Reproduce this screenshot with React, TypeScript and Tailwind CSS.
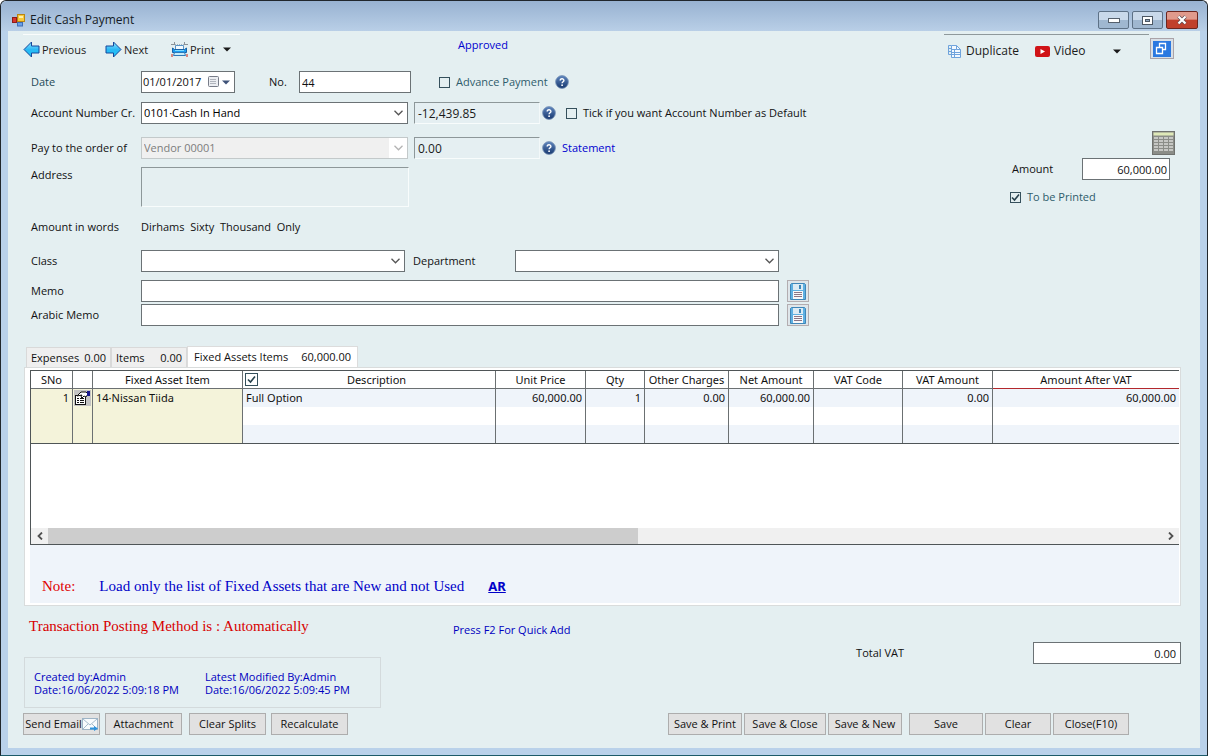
import type { ReactNode } from "react";

const COLUMNS = [
  { key: "sno", label: "SNo", width: "w-[42px]", align: "text-right" },
  { key: "edit", label: "", width: "w-[20px]", align: "text-center" },
  { key: "item", label: "Fixed Asset Item", width: "w-[150px]", align: "text-left" },
  { key: "description", label: "Description", width: "w-[253px]", align: "text-left" },
  { key: "unitPrice", label: "Unit Price", width: "w-[90px]", align: "text-right" },
  { key: "qty", label: "Qty", width: "w-[59px]", align: "text-right" },
  { key: "otherCharges", label: "Other Charges", width: "w-[84px]", align: "text-right" },
  { key: "netAmount", label: "Net Amount", width: "w-[85px]", align: "text-right" },
  { key: "vatCode", label: "VAT Code", width: "w-[89px]", align: "text-left" },
  { key: "vatAmount", label: "VAT Amount", width: "w-[90px]", align: "text-right" },
  { key: "afterVat", label: "Amount After VAT", width: "", align: "text-right" },
];

const ROWS: Record<string, string>[] = [
  {
    sno: "1",
    item: "14·Nissan Tiida",
    description: "Full Option",
    unitPrice: "60,000.00",
    qty: "1",
    otherCharges: "0.00",
    netAmount: "60,000.00",
    vatAmount: "0.00",
    afterVat: "60,000.00",
  },
  {},
  {},
];

const FIELD = "h-[22px] border border-[#6b7275] bg-white px-0.5 outline-none";

function FormIcon() {
  return (
    <svg width="14" height="14" viewBox="0 0 14 14" className="shrink-0">
      <rect x="0.5" y="4.5" width="4" height="5" fill="#d8342c" stroke="#8e1d18" />
      <rect x="5.5" y="1.5" width="7" height="7" fill="#f8c93c" stroke="#b98512" />
      <rect x="7" y="3" width="4" height="2" fill="#fff0a8" />
      <rect x="5.5" y="9.5" width="5" height="3.5" fill="#6aa0e8" stroke="#3e6db5" />
    </svg>
  );
}

function ArrowIcon({ flip = false }: { flip?: boolean }) {
  return (
    <svg width="17" height="17" viewBox="0 0 17 17">
      <defs>
        <linearGradient id="arrow" x1="0" y1="0" x2="0" y2="1">
          <stop offset="0" stopColor="#8fe6ff" />
          <stop offset="0.5" stopColor="#2bb8f5" />
          <stop offset="1" stopColor="#18c8f4" />
        </linearGradient>
      </defs>
      <path
        d={flip ? "M8.5 1v4H1v7h7.5v4L16 8.500z" : "M8.5 1v4H16v7H8.500v4L1 8.500z"}
        fill="url(#arrow)"
        stroke="#15479c"
        strokeLinejoin="round"
      />
    </svg>
  );
}

function PrinterIcon() {
  return (
    <svg width="17" height="16" viewBox="0 0 17 16">
      <path d="M3.500 0v3M13.500 0v3M0 2.500h3M14 2.500h3" stroke="#8b9298" />
      <path d="M4 2.500h9" stroke="#a8b4bc" strokeDasharray="1 1" />
      <path d="M4.500 7V3.500h8V7" fill="#f2faff" stroke="#5b93c4" />
      <path d="M1.500 6v4.500h14V6l-2 1.500h-10z" fill="#1d9df0" stroke="#1762a8" />
      <path d="M4 8.500h9" stroke="#7fdcff" />
      <path d="M3.500 10.500h10l1 3h-12z" fill="#c6ecfb" stroke="#2d78b8" />
      <path d="M0 12h2v3H0zM15 12h2v3h-2z" fill="#d98880" />
    </svg>
  );
}

function Caret({ className = "text-[#1a1a1a]" }: { className?: string }) {
  return (
    <svg width="8" height="5" viewBox="0 0 8 5" className={className}>
      <path d="M0 0.5h8L4 4.5z" fill="currentColor" />
    </svg>
  );
}

function DuplicateIcon() {
  return (
    <svg width="14" height="13" viewBox="0 0 14 13" fill="none" stroke="#6fa3dc">
      <path d="M3.500 0.500h-3v9h3M0.500 3.500h3M0.500 6.500h3" />
      <path d="M3.500 12.500v-12h5l4 4v8z" fill="#f3f9ff" />
      <path d="M8.500 0.500v4h4M3.500 4.500h5M3.500 7.500h9M3.500 9.500h9M6.500 4.500v8" />
    </svg>
  );
}

function VideoIcon() {
  return (
    <svg width="15" height="11" viewBox="0 0 15 11">
      <rect width="15" height="11" rx="2" fill="#d01317" />
      <path d="M5.500 3v5L10 5.500z" fill="#fff" />
    </svg>
  );
}

function HelpIcon() {
  return (
    <svg width="14" height="14" viewBox="0 0 14 14" className="shrink-0">
      <defs>
        <linearGradient id="help" x1="0" y1="0" x2="0" y2="1">
          <stop offset="0" stopColor="#5f86be" />
          <stop offset="1" stopColor="#17386f" />
        </linearGradient>
      </defs>
      <circle cx="7" cy="7" r="6.400" fill="url(#help)" stroke="#7a94b8" strokeWidth="0.800" />
      <path d="M5.200 5.600c0-2.400 3.700-2.300 3.700-.2 0 1.300-1.800 1.300-1.800 2.900" fill="none" stroke="#fff" strokeWidth="1.400" />
      <circle cx="7.100" cy="10.200" r="0.900" fill="#fff" />
    </svg>
  );
}

function CalculatorIcon() {
  return (
    <svg width="23" height="24" viewBox="0 0 23 24">
      <rect x="0.500" y="0.500" width="22" height="23" fill="#8b8d88" stroke="#70726f" />
      <rect x="1.500" y="1.500" width="20" height="3" fill="#dfe9b8" />
      {[6, 9, 12, 15, 18].map((y) =>
        [2, 7, 12, 17].map((x) => <rect key={`${x}-${y}`} x={x} y={y} width="4" height="2" fill="#c6c7c4" />)
      )}
    </svg>
  );
}

function SaveIcon() {
  return (
    <svg width="16" height="17" viewBox="0 0 16 17">
      <path d="M0.500 1.500l1-1h13l1 1v15h-15z" fill="#5fb0e2" stroke="#3f86b8" />
      <rect x="3" y="1" width="10" height="6" fill="#dcebf4" />
      <rect x="9" y="2" width="2" height="4" fill="#3f87b8" />
      <rect x="3" y="8" width="10" height="8" fill="#f7f8fa" />
      <path d="M4 9.500h8M4 11.500h8M4 13.500h8" stroke="#8b7585" />
    </svg>
  );
}

function EditRowIcon() {
  return (
    <svg width="17" height="16" viewBox="0 0 17 16" className="block bg-[#c4c4c4]">
      <rect x="1.500" y="5.500" width="10" height="9" fill="#fff" stroke="#111" />
      <path d="M3 8.500h2M6 8.500h4M3 10.500h2M6 10.500h4M3 12.500h2M6 12.500h4" stroke="#111" />
      <path d="M3 6l4-4h5l2 2-2 3-2-1-2 2-1-1 1-2z" fill="#fff" stroke="#111" />
      <rect x="13" y="1" width="3" height="5" fill="#17178c" />
    </svg>
  );
}

function MailIcon() {
  return (
    <svg width="16" height="14" viewBox="0 0 16 14" className="shrink-0">
      <rect x="0.500" y="1.500" width="15" height="11" fill="#f8fbfd" stroke="#9eb4c6" />
      <path d="M1 2l7 6 7-6M1 12l5-5M15 12l-5-5" fill="none" stroke="#a5bccd" />
      <path d="M8 10.500h4V9l4 2.500-4 2.500v-1.500H8z" fill="#2f93dc" />
    </svg>
  );
}

function CheckBox({ id, checked = false, label }: { id: string; checked?: boolean; label?: string }) {
  return (
    <span className="grid shrink-0 place-items-center">
      <input
        id={id}
        type="checkbox"
        aria-label={label}
        defaultChecked={checked}
        className={`peer col-start-1 row-start-1 appearance-none border border-[#35505c] ${label ? "size-[13px]" : "size-[11px]"}`}
      />
      <svg
        width="9"
        height="9"
        viewBox="0 0 9 9"
        className="pointer-events-none invisible col-start-1 row-start-1 text-[#26404c] peer-checked:visible"
      >
        <path d="M1 4.500L3.500 7 8 1.500" fill="none" stroke="currentColor" strokeWidth="1.600" />
      </svg>
    </span>
  );
}

function Combo({ id, value = "", className = "", disabled = false }: { id: string; value?: string; className?: string; disabled?: boolean }) {
  return (
    <span className={`grid items-center ${className}`}>
      <select
        id={id}
        disabled={disabled}
        className={`col-start-1 row-start-1 h-[22px] w-full appearance-none border px-0.5 outline-none ${
          disabled ? "border-[#c3c9ca] bg-[#f0f0f0] text-[#7d7d7d]" : "border-[#6b7275] bg-white text-black"
        }`}
      >
        <option>{value}</option>
      </select>
      <span className="pointer-events-none col-start-1 row-start-1 mr-px flex h-5 w-[18px] items-center justify-center justify-self-end bg-white">
        <svg width="9" height="6" viewBox="0 0 9 6" className={disabled ? "text-[#b4b4b4]" : "text-[#555]"}>
          <path d="M0.500 0.800l4 4 4-4" fill="none" stroke="currentColor" strokeWidth="1.300" />
        </svg>
      </span>
    </span>
  );
}

function Readout({ value, label }: { value: string; label: string }) {
  return (
    <input
      readOnly
      aria-label={label}
      defaultValue={value}
      className="ml-[6px] h-[22px] w-[126px] border border-t-[#8d9799] border-r-[#f3f8f9] border-b-[#f8fcfc] border-l-[#8d9799] bg-[#e5eff2] px-[3px] text-[12px] text-[#1b1b1b] outline-none"
    />
  );
}

function Label({ htmlFor, children, className = "" }: { htmlFor: string; children: ReactNode; className?: string }) {
  return (
    <label htmlFor={htmlFor} className={`w-[110px] shrink-0 ${className}`}>
      {children}
    </label>
  );
}

function PushButton({ children, className }: { children: ReactNode; className: string }) {
  return (
    <button className={`flex h-[22px] items-center justify-center border border-[#adadad] bg-[#e1e1e1] whitespace-nowrap ${className}`}>
      {children}
    </button>
  );
}

function SaveMemoButton({ label }: { label: string }) {
  return (
    <button aria-label={label} className="ml-2 flex size-[22px] shrink-0 items-center justify-center border border-[#b3adb0] bg-[#dfe6ea]">
      <SaveIcon />
    </button>
  );
}

function TitleBar() {
  const caption =
    "flex h-[18px] w-[31px] items-center justify-center rounded-[2px] border border-[#5d7186] bg-linear-to-b from-[#c9d9ea] from-50% to-[#9fb7d0] to-50%";
  return (
    <header className="flex h-[30px] items-center gap-1 rounded-t-md bg-linear-to-b from-[#98b2d1] to-[#b9cfe7] pt-2 pr-[9px] pl-[11px]">
      <FormIcon />
      <h1 className="flex-1 text-[12px] leading-4 text-[#141c26]">Edit Cash Payment</h1>
      <div className="flex gap-[3px]">
        <button aria-label="Minimize" className={caption}>
          <svg width="12" height="5" viewBox="0 0 12 5">
            <rect x="0.500" y="0.500" width="11" height="4" fill="#fff" stroke="#55606c" />
          </svg>
        </button>
        <button aria-label="Maximize" className={caption}>
          <svg width="11" height="9" viewBox="0 0 11 9">
            <rect x="0.500" y="0.500" width="10" height="8" fill="#fff" stroke="#4c5763" />
            <rect x="3.500" y="3.500" width="4" height="2" fill="#8fa7c0" stroke="#4c5763" />
          </svg>
        </button>
        <button
          aria-label="Close"
          className="flex h-[18px] w-[32px] items-center justify-center rounded-[2px] border border-[#6b2620] bg-linear-to-b from-[#e09a8c] from-45% to-[#c0402c] to-50%"
        >
          <svg width="12" height="10" viewBox="0 0 12 10">
            <path d="M2.500 1.500l7 7M9.500 1.500l-7 7" stroke="#5e4a52" strokeWidth="3.600" />
            <path d="M2.500 1.500l7 7M9.500 1.500l-7 7" stroke="#fff" strokeWidth="2.200" />
          </svg>
        </button>
      </div>
    </header>
  );
}

function Toolbar() {
  return (
    <div className="flex h-[35px] items-start pt-[3px]">
      <div className="ml-[15px] flex h-[30px] w-[217px] items-center border-t border-white/80 text-[#1b1b1b]">
        <button className="flex w-[82px] items-center gap-0.5">
          <ArrowIcon />
          Previous
        </button>
        <button className="flex w-[66px] items-center gap-0.5">
          <ArrowIcon flip />
          Next
        </button>
        <button className="flex w-[52px] items-center gap-0.5">
          <PrinterIcon />
          Print
        </button>
        <button aria-label="Print options">
          <Caret />
        </button>
      </div>
      <p className="ml-[218px] flex-1 pt-1 leading-[14px] text-[#0000d0]">Approved</p>
      <div className="flex h-[33px] w-[205px] items-center border-t border-[#8f999b] pl-1 text-[12px] text-[#1b1b1b]">
        <button className="flex w-[87px] items-center gap-1">
          <DuplicateIcon />
          Duplicate
        </button>
        <button className="flex w-[78px] items-center gap-1">
          <VideoIcon />
          Video
        </button>
        <button aria-label="Video options">
          <Caret />
        </button>
      </div>
      <button aria-label="Restore window" className="mt-1 mr-[26px] ml-px flex h-[21px] w-6 items-center justify-center border border-[#aaa3a8] bg-[#d8dfe6]">
        <svg width="18" height="16" viewBox="0 0 18 16">
          <rect width="18" height="16" fill="#2a78e0" />
          <path d="M6.500 6V2.500h6v6H10M3.500 6.500h6v6h-6z" fill="none" stroke="#fff" strokeWidth="1.300" />
        </svg>
      </button>
    </div>
  );
}

function PaymentForm() {
  return (
    <div className="flex-1 pt-[5px] pl-[23px]">
      <div className="flex items-center">
        <Label htmlFor="date" className="text-[#1f4a58]">Date</Label>
        <div className="flex h-[22px] w-[94px] items-center border border-[#6b7275] bg-white">
          <input id="date" defaultValue="01/01/2017" className="w-[66px] pl-px outline-none" />
          <button aria-label="Open calendar" className="flex items-center gap-0.5">
            <svg width="12" height="12" viewBox="0 0 12 12">
              <rect x="0.500" y="0.500" width="10" height="10" rx="1" fill="#eceef2" stroke="#777c88" />
              <path d="M2.500 3.500h6M2.500 5.500h6M2.500 7.500h6" stroke="#777c88" strokeDasharray="1 1" />
            </svg>
            <Caret className="text-[#3f5378]" />
          </button>
        </div>
        <label htmlFor="number" className="ml-[34px] w-[30px]">No.</label>
        <input id="number" defaultValue="44" className={`${FIELD} w-[112px]`} />
        <span className="ml-7 flex items-center gap-1.5">
          <CheckBox id="advance" />
          <label htmlFor="advance" className="w-[93px] text-[#2f5c6b]">Advance Payment</label>
          <HelpIcon />
        </span>
      </div>

      <div className="mt-[9px] flex items-center">
        <Label htmlFor="account">Account Number Cr.</Label>
        <Combo id="account" value="0101·Cash In Hand" className="w-[267px]" />
        <Readout value="-12,439.85" label="Account balance" />
        <span className="ml-0.5 flex items-center">
          <HelpIcon />
          <span className="ml-2.5 flex items-center gap-1.5">
            <CheckBox id="default" />
            <label htmlFor="default">Tick if you want Account Number as Default</label>
          </span>
        </span>
      </div>

      <div className="mt-[13px] flex items-center">
        <Label htmlFor="payee">Pay to the order of</Label>
        <Combo id="payee" value="Vendor 00001" className="w-[267px]" disabled />
        <Readout value="0.00" label="Payee balance" />
        <span className="ml-0.5 flex items-center gap-1.5">
          <HelpIcon />
          <a href="#statement" className="text-[#0000d0]">Statement</a>
        </span>
      </div>

      <div className="mt-2 flex">
        <Label htmlFor="address">Address</Label>
        <textarea
          id="address"
          readOnly
          className="h-10 w-[268px] resize-none border border-t-[#8d9799] border-r-[#f8fcfc] border-b-[#f8fcfc] border-l-[#8d9799] bg-[#e5eff1] outline-none"
        />
      </div>

      <div className="mt-3 flex">
        <span className="w-[110px]">Amount in words</span>
        <span className="whitespace-pre">{"Dirhams  Sixty  Thousand  Only"}</span>
      </div>

      <div className="mt-[15px] flex items-center">
        <Label htmlFor="class">Class</Label>
        <Combo id="class" className="w-[264px]" />
        <label htmlFor="department" className="ml-2 w-[102px]">Department</label>
        <Combo id="department" className="w-[264px]" />
      </div>

      <div className="mt-2 flex items-center">
        <Label htmlFor="memo">Memo</Label>
        <input id="memo" className={`${FIELD} w-[638px]`} />
        <SaveMemoButton label="Save memo" />
      </div>

      <div className="mt-0.5 flex items-center">
        <Label htmlFor="arabic-memo">Arabic Memo</Label>
        <input id="arabic-memo" className={`${FIELD} w-[638px]`} />
        <SaveMemoButton label="Save Arabic memo" />
      </div>
    </div>
  );
}

function AmountPanel() {
  return (
    <div className="flex w-[190px] flex-col pt-[65px] pr-[25px]">
      <button aria-label="Calculator" className="self-end">
        <CalculatorIcon />
      </button>
      <div className="mt-[3px] mr-[5px] flex items-center justify-between pl-0.5">
        <label htmlFor="amount">Amount</label>
        <input id="amount" defaultValue="60,000.00" className={`${FIELD} w-[88px] text-right`} />
      </div>
      <div className="mt-[9px] flex items-center gap-1.5">
        <CheckBox id="to-be-printed" checked />
        <label htmlFor="to-be-printed" className="text-[#2f5c6b]">To be Printed</label>
      </div>
    </div>
  );
}

function AssetsTable() {
  return (
    <table className="w-full table-fixed border-separate border-spacing-0 border-b border-[#4f5557] font-['Noto_Sans',sans-serif]">
      <thead>
        <tr className="h-[18px]">
          {COLUMNS.map((col, i) => (
            <th
              key={col.key}
              scope="col"
              className={`border-b bg-white p-0 text-center font-normal ${col.width} ${
                i === COLUMNS.length - 1 ? "border-b-[#b3282d]" : "border-r border-[#6b7072]"
              }`}
            >
              {col.key === "description" ? (
                <span className="flex items-center pl-0.5">
                  <CheckBox id="all-rows" checked label="Select all rows" />
                  <span className="flex-1">{col.label}</span>
                </span>
              ) : (
                col.label
              )}
            </th>
          ))}
        </tr>
      </thead>
      <tbody>
        {ROWS.map((row, r) => (
          <tr key={r} className="h-[18px]">
            {COLUMNS.map((col, i) => (
              <td
                key={col.key}
                className={`${i === 1 ? "p-0 pl-px" : "px-[3px] py-0"} ${col.align} ${i < 3 ? "bg-[#f4f3da]" : r % 2 ? "bg-white" : "bg-[#eff4fa]"} ${
                  i < COLUMNS.length - 1 ? "border-r border-[#6b7072]" : ""
                }`}
              >
                {i === 1 && r === 0 ? <EditRowIcon /> : row[col.key]}
              </td>
            ))}
          </tr>
        ))}
      </tbody>
    </table>
  );
}

function SplitsPanel() {
  const tab = "flex h-5 items-center justify-between border border-b-0 border-[#d9d9d9] bg-[#efefef] px-1";
  return (
    <section className="mt-5 mr-[19px] ml-4">
      <div role="tablist" className="ml-0.5 flex items-end">
        <button role="tab" aria-selected="false" className={`${tab} w-[85px]`}>
          <span>Expenses</span>
          <span>0.00</span>
        </button>
        <button role="tab" aria-selected="false" className={`${tab} w-[76px]`}>
          <span>Items</span>
          <span>0.00</span>
        </button>
        <button role="tab" aria-selected="true" className="flex h-[21px] w-[171px] items-center justify-between border border-b-0 border-[#dcdcdc] bg-white px-1.5">
          <span>Fixed Assets Items</span>
          <span>60,000.00</span>
        </button>
      </div>
      <div className="border border-[#d9dcdc] bg-white pt-0.5 pr-px pb-0.5 pl-[5px]">
        <div className="bg-[#eff4fa]">
          <div className="border border-r-0 border-[#4f5557] bg-white">
            <AssetsTable />
            <div className="mt-[84px] flex h-4 items-center bg-[#f0f0f0]">
              <button aria-label="Scroll left" className="flex w-[17px] justify-center">
                <svg width="6" height="8" viewBox="0 0 6 8">
                  <path d="M5 0.500L1.500 4 5 7.500" fill="none" stroke="#505050" strokeWidth="1.800" />
                </svg>
              </button>
              <div className="flex flex-1">
                <div className="h-4 w-[53%] bg-[#cdcdcd]" />
              </div>
              <button aria-label="Scroll right" className="flex w-[17px] justify-center">
                <svg width="6" height="8" viewBox="0 0 6 8">
                  <path d="M1 0.500L4.500 4 1 7.500" fill="none" stroke="#505050" strokeWidth="1.800" />
                </svg>
              </button>
            </div>
          </div>
          <p className="flex h-[58px] items-center gap-6 pt-[26px] pb-[2px] pl-3 font-['Liberation_Serif',serif] text-[15px]">
            <span className="text-[#e00000]">Note:</span>
            <span className="text-[#0000c8]">Load only the list of Fixed Assets that are New and not Used</span>
            <a href="#ar" className="font-['Noto_Sans',sans-serif] text-[13px] font-bold text-[#0000c8] underline">AR</a>
          </p>
        </div>
      </div>
    </section>
  );
}

function Summary() {
  return (
    <div className="flex items-start pr-[19px] pl-4">
      <div className="w-[357px]">
        <p className="pt-2.5 pl-[5px] font-['Liberation_Serif',serif] text-[15px] leading-5 text-[#d80000]">
          Transaction Posting Method is : Automatically
        </p>
        <div className="mt-[21px] flex h-[51px] items-center border border-[#d3dadc] px-[9px] leading-[13px] text-[#0000c0]">
          <p className="w-[171px]">
            Created by:Admin
            <br />
            Date:16/06/2022 5:09:18 PM
          </p>
          <p>
            Latest Modified By:Admin
            <br />
            Date:16/06/2022 5:09:45 PM
          </p>
        </div>
      </div>
      <p className="ml-[72px] pt-4 text-[#0000c0]">Press F2 For Quick Add</p>
      <div className="mt-9 ml-auto flex items-center justify-between gap-[129px]">
        <label htmlFor="total-vat">Total VAT</label>
        <input id="total-vat" readOnly defaultValue="0.00" className={`${FIELD} w-[148px] pr-1 text-right`} />
      </div>
    </div>
  );
}

function Actions() {
  return (
    <div className="mt-[5px] flex justify-between pr-[71px] pb-3 pl-[15px]">
      <div className="flex gap-[5px]">
        <PushButton className="w-[77px]">
          Send Email
          <MailIcon />
        </PushButton>
        <PushButton className="w-[77px]">Attachment</PushButton>
        <PushButton className="ml-0.5 w-[77px]">Clear Splits</PushButton>
        <PushButton className="w-[77px]">Recalculate</PushButton>
      </div>
      <div className="flex gap-0.5">
        <PushButton className="w-[74px]">Save &amp; Print</PushButton>
        <PushButton className="w-[82px]">Save &amp; Close</PushButton>
        <PushButton className="w-[74px]">Save &amp; New</PushButton>
        <PushButton className="ml-[5px] w-[74px]">Save</PushButton>
        <PushButton className="w-[66px]">Clear</PushButton>
        <PushButton className="w-[76px]">Close(F10)</PushButton>
      </div>
    </div>
  );
}

export default function App() {
  return (
    <div className="flex min-h-screen flex-col rounded-t-md border border-[#20262c] border-b-[#1c5a68] bg-[#b9d1ea] font-['Open_Sans',sans-serif] text-[11px] leading-4 text-[#111]">
      <TitleBar />
      <main className="mx-[7px] mb-[7px] flex-1 bg-[#e4eff1]">
        <Toolbar />
        <div className="flex justify-between">
          <PaymentForm />
          <AmountPanel />
        </div>
        <SplitsPanel />
        <Summary />
        <Actions />
      </main>
    </div>
  );
}
